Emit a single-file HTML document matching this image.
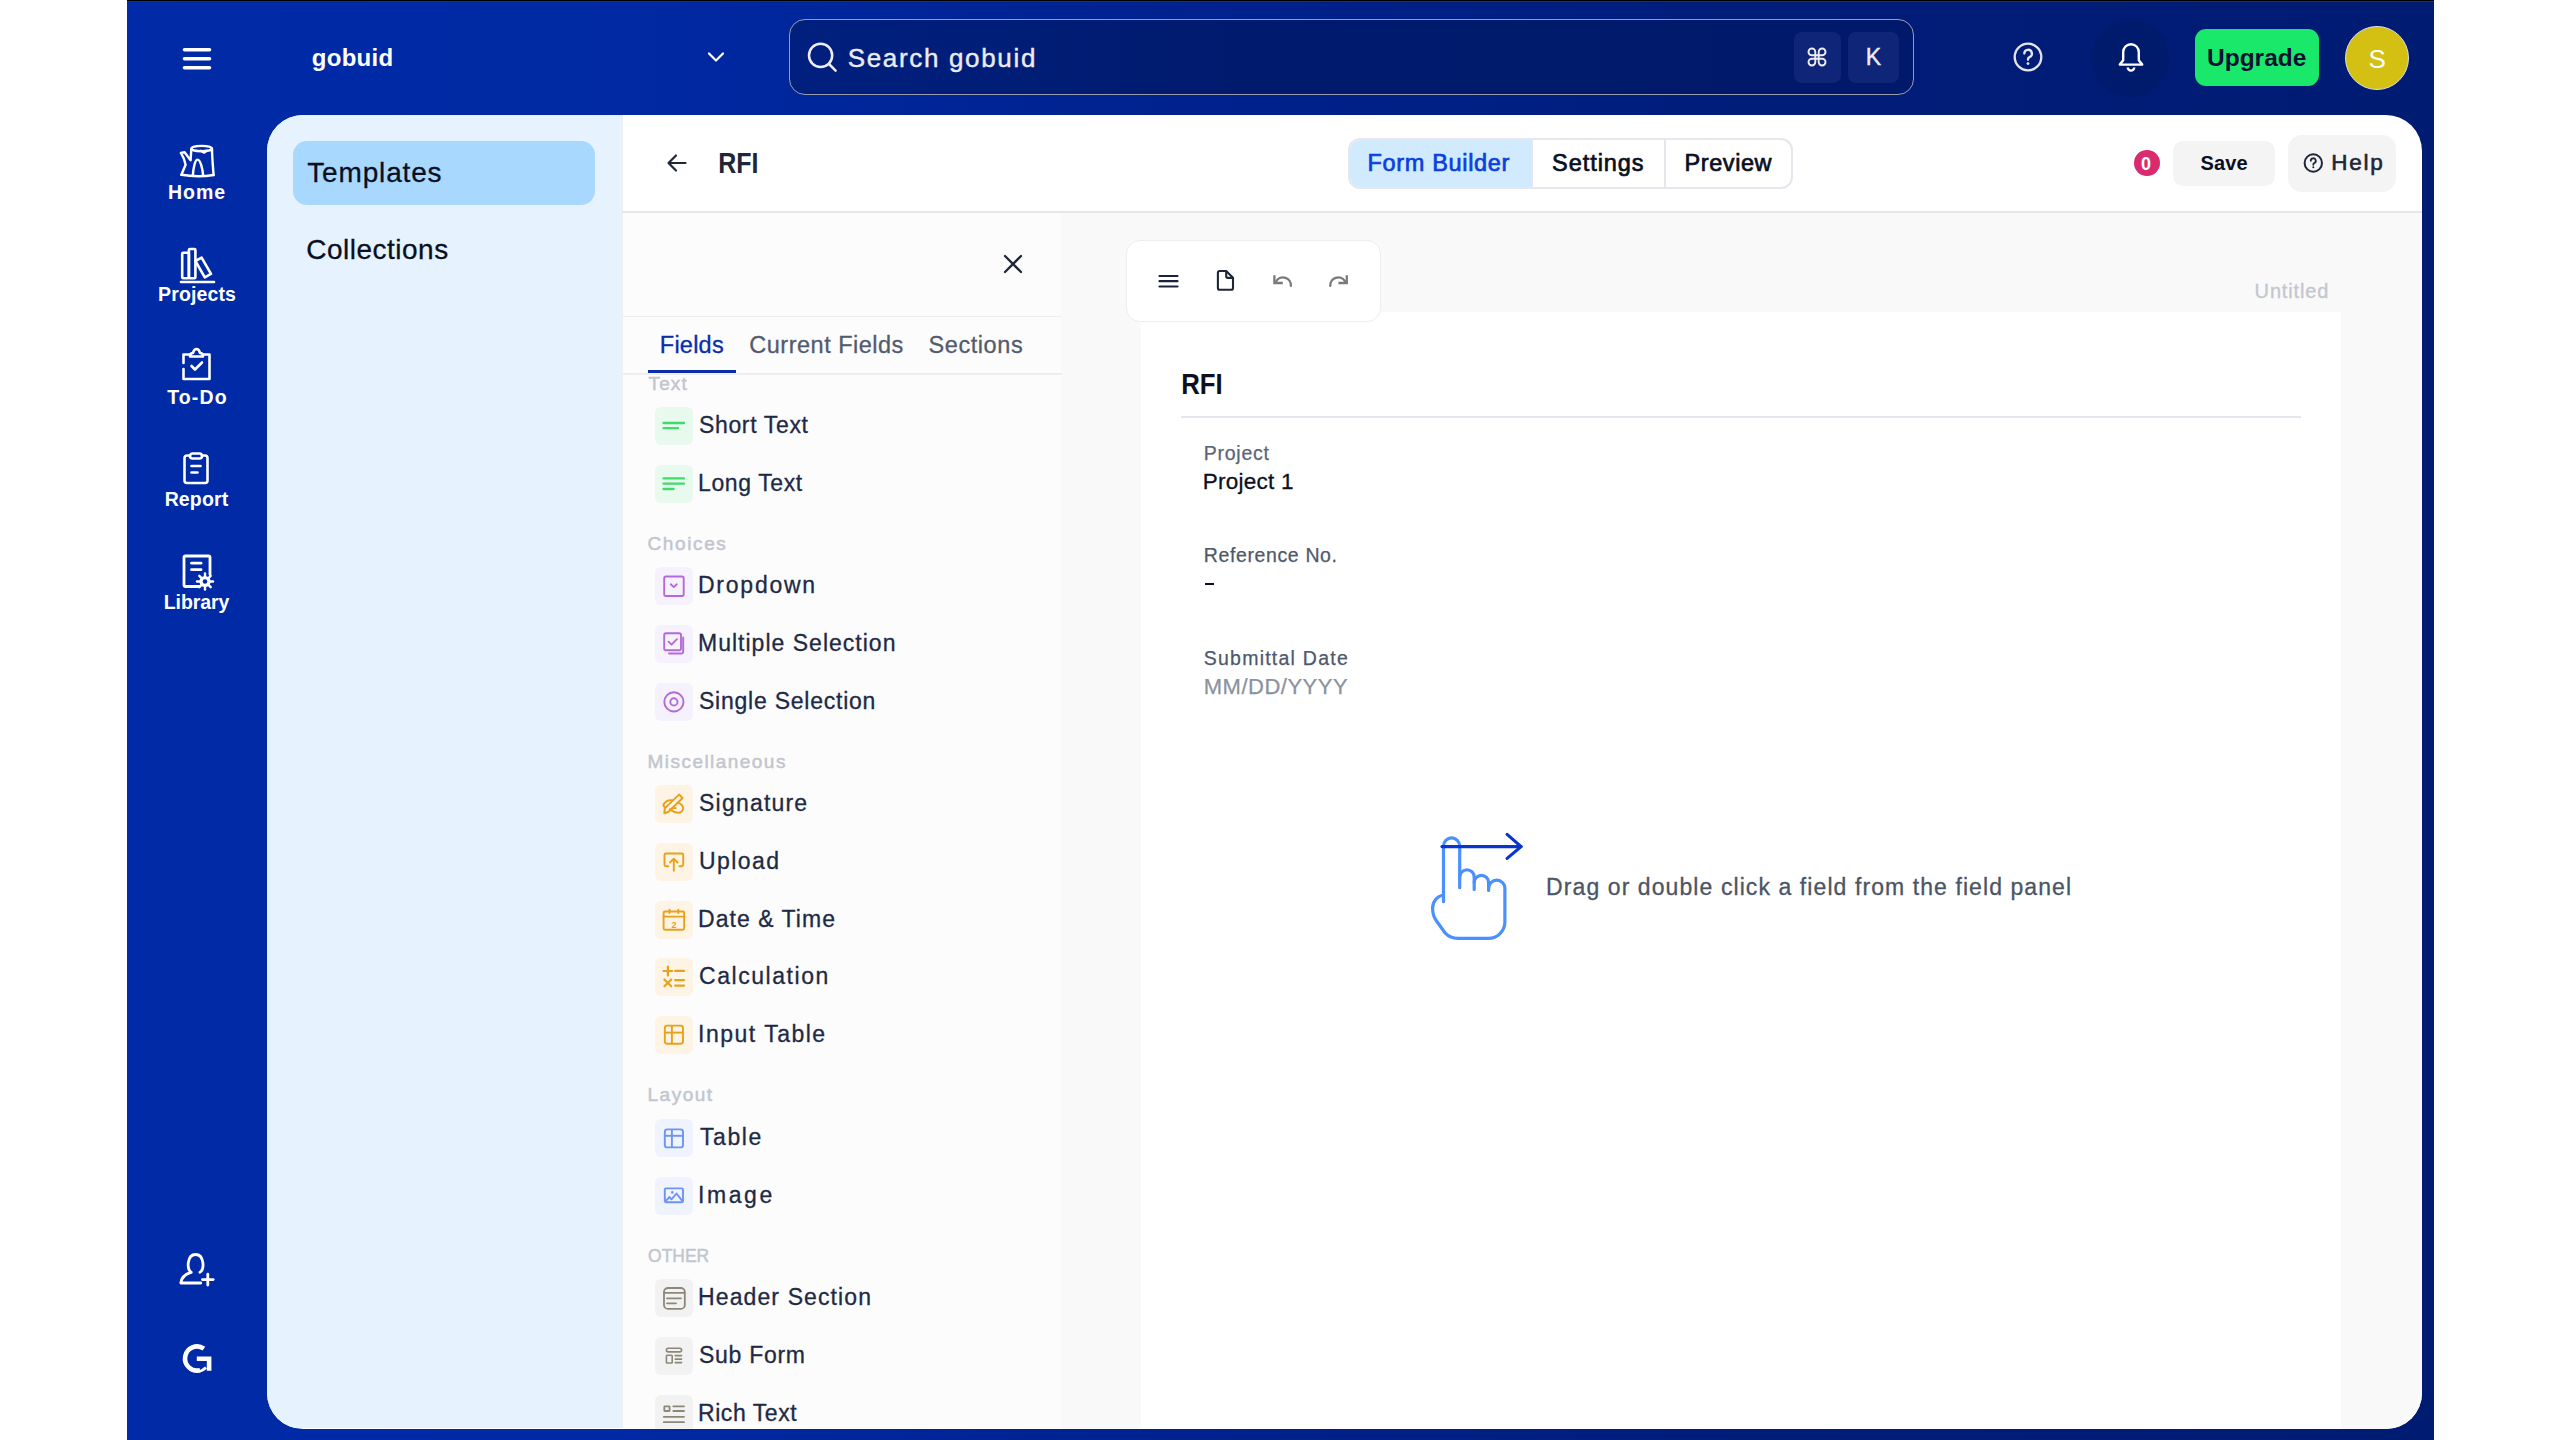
<!DOCTYPE html>
<html><head><meta charset="utf-8">
<style>
*{margin:0;padding:0;box-sizing:border-box}
html,body{width:2560px;height:1440px;overflow:hidden;background:#fff;font-family:"Liberation Sans",sans-serif}
.a{position:absolute}
.t{position:absolute;white-space:nowrap;line-height:1}
svg{overflow:visible}
</style></head>
<body>
<div class="a" style="left:127px;top:0px;width:2307px;height:1440px;background:linear-gradient(90deg,#002aa7 0%,#0029a4 20%,#00228f 45%,#001d7a 70%,#001b72 100%);"></div>
<div class="a" style="left:127px;top:0px;width:2307px;height:1px;background:#000;"></div>
<div class="a" style="left:127px;top:1px;width:2307px;height:1px;background:#0030c2;"></div>
<svg class="a" style="left:181px;top:47px" width="32" height="24" viewBox="0 0 32 24"><g stroke="#fff" stroke-width="3.6" stroke-linecap="round"><line x1="3.5" y1="2.8" x2="28.5" y2="2.8"/><line x1="3.5" y1="11.8" x2="28.5" y2="11.8"/><line x1="3.5" y1="20.8" x2="28.5" y2="20.8"/></g></svg>
<div class="t" style="left:311.80px;top:46px;font-size:24px;color:#fff;font-weight:bold;letter-spacing:0.260px;">gobuid</div>
<svg class="a" style="left:704px;top:48px" width="24" height="18" viewBox="0 0 24 18"><path d="M5 5.5l7 7 7-7" fill="none" stroke="#fff" stroke-width="2.2" stroke-linecap="round" stroke-linejoin="round"/></svg>
<div class="a" style="left:788.5px;top:19.3px;width:1125px;height:76px;background:linear-gradient(90deg,#00207f 0%,#001b6e 40%,#00196a 100%);border-radius:16px;border:1.6px solid #9a9cae;"></div>
<svg class="a" style="left:806px;top:41px" width="34" height="34" viewBox="0 0 34 34"><circle cx="14.6" cy="14.4" r="11.6" fill="none" stroke="#ececf2" stroke-width="2.5"/><line x1="23" y1="23" x2="29.6" y2="29.6" stroke="#ececf2" stroke-width="2.5" stroke-linecap="round"/></svg>
<div class="t" style="left:847.70px;top:45px;font-size:26px;color:#ececf2;letter-spacing:1.667px;-webkit-text-stroke:0.4px #ececf2;">Search gobuid</div>
<div class="a" style="left:1794px;top:32px;width:47px;height:51px;background:#0f2577;border-radius:8px;"></div>
<div class="a" style="left:1848px;top:32px;width:51px;height:51px;background:#0f2577;border-radius:8px;"></div>
<svg class="a" style="left:1808.3px;top:48px" width="18" height="18" viewBox="0 0 18 18"><path d="M7.3 14.1V3.9A3.4 3.4 0 1 0 3.9 7.3H14.1A3.4 3.4 0 1 0 10.7 3.9V14.1A3.4 3.4 0 1 0 14.1 10.7H3.9A3.4 3.4 0 1 0 7.3 14.1z" fill="none" stroke="#ececf2" stroke-width="1.9"/></svg>
<div class="t" style="left:1865.70px;top:46px;font-size:23px;color:#ececf2;-webkit-text-stroke:0.4px #ececf2;">K</div>
<svg class="a" style="left:2012px;top:41px" width="32" height="32" viewBox="0 0 32 32"><circle cx="16" cy="16" r="13.3" fill="none" stroke="#e4e4ea" stroke-width="2.3"/><path d="M12.3 12.6a3.8 3.8 0 1 1 5.2 3.5c-.9.4-1.5 1.1-1.5 2.1v.6" fill="none" stroke="#e4e4ea" stroke-width="2.3" stroke-linecap="round"/><circle cx="16" cy="22.6" r="1.4" fill="#e4e4ea"/></svg>
<div class="a" style="left:2092px;top:20px;width:77px;height:77px;border-radius:50%;background:#001a6c"></div>
<svg class="a" style="left:2116px;top:41px" width="30" height="34" viewBox="0 0 30 34"><path d="M15 3.2a7.8 7.8 0 0 0-7.8 7.8v8.2L3.8 23.6h22.4l-3.4-4.4V11A7.8 7.8 0 0 0 15 3.2z" fill="none" stroke="#fff" stroke-width="2.4" stroke-linejoin="round"/><path d="M11.8 26.4a3.2 3.2 0 0 0 6.4 0" fill="none" stroke="#fff" stroke-width="2.4"/></svg>
<div class="a" style="left:2195px;top:29px;width:124px;height:57px;background:#19e86b;border-radius:11px;"></div>
<div class="t" style="left:2207.00px;top:46px;font-size:24.5px;color:#0a1233;font-weight:bold;">Upgrade</div>
<div class="a" style="left:2345px;top:25.5px;width:64px;height:64px;border-radius:50%;background:#d3c012;border:1.5px solid #dedee8"></div>
<div class="t" style="left:2368.50px;top:46px;font-size:26px;color:#fff;">S</div>
<div class="t" style="left:168.00px;top:183px;font-size:19.5px;color:#fff;font-weight:bold;letter-spacing:1.000px;">Home</div>
<div class="t" style="left:158.00px;top:285px;font-size:19.5px;color:#fff;font-weight:bold;letter-spacing:0.143px;">Projects</div>
<div class="t" style="left:167.30px;top:388px;font-size:19.5px;color:#fff;font-weight:bold;letter-spacing:1.100px;">To-Do</div>
<div class="t" style="left:164.65px;top:490px;font-size:19.5px;color:#fff;font-weight:bold;letter-spacing:0.140px;">Report</div>
<div class="t" style="left:163.75px;top:593px;font-size:19.5px;color:#fff;font-weight:bold;letter-spacing:-0.083px;">Library</div>
<svg class="a" style="left:178px;top:144px" width="40" height="36" viewBox="0 0 40 36"><g fill="none" stroke="#fff" stroke-width="2.4" stroke-linejoin="round" stroke-linecap="round"><ellipse cx="23.6" cy="4.6" rx="10.3" ry="2.7"/><path d="M34 4.8C34 13 35 23 35.6 31"/><path d="M3.4 30.8Q19.5 33.6 35.6 31"/><path d="M13.3 5.2L12.6 16.4 6.6 8.2 2.9 8.9Q6.5 14.5 7.6 20.8L3.4 30.8"/><path d="M14.8 31.8C15.4 24 17 15.6 19.6 15.6S24.6 24 25.2 31.8"/><path d="M23 6.8L26.2 8.6 28.4 6.8"/></g></svg>
<svg class="a" style="left:178px;top:246px" width="40" height="36" viewBox="0 0 40 36"><g fill="none" stroke="#fff" stroke-width="2.6" stroke-linejoin="round" stroke-linecap="round"><rect x="4.2" y="6.7" width="6.7" height="25.5" rx="1"/><rect x="10.9" y="3" width="6.5" height="29.2" rx="1"/><path d="M17.4 15l6.2-3.4 9.4 16.3-6.2 3.4z"/><line x1="3" y1="36" x2="36" y2="36"/></g></svg>
<svg class="a" style="left:178px;top:346px" width="40" height="36" viewBox="0 0 40 36"><g fill="none" stroke="#fff" stroke-width="2.6" stroke-linejoin="round" stroke-linecap="round"><path d="M5.5 17V8.5h6.5M25 8.5h6.5v24.5h-26v-10"/><path d="M12 10.5q0-3.5 3-3.5 1-4 3.5-4t3.5 4q3 0 3 3.5z"/><path d="M13.5 20l3.5 3.5 7-7"/></g></svg>
<svg class="a" style="left:178px;top:450px" width="40" height="36" viewBox="0 0 40 36"><g fill="none" stroke="#fff" stroke-width="2.6" stroke-linejoin="round" stroke-linecap="round"><path d="M12 5.5H9a2.5 2.5 0 0 0-2.5 2.5v22.5A2.5 2.5 0 0 0 9 33h18a2.5 2.5 0 0 0 2.5-2.5V8A2.5 2.5 0 0 0 27 5.5h-3"/><rect x="12" y="3.5" width="12" height="5" rx="2.5"/><line x1="13.5" y1="16" x2="22.5" y2="16"/><line x1="13.5" y1="22.5" x2="19.5" y2="22.5"/></g></svg>
<svg class="a" style="left:178px;top:552px" width="40" height="40" viewBox="0 0 40 40"><g fill="none" stroke="#fff" stroke-width="2.8" stroke-linejoin="round" stroke-linecap="round"><path d="M21.5 34.5H7.5a1.5 1.5 0 0 1-1.5-1.5V5.5A1.5 1.5 0 0 1 7.5 4h23a1.5 1.5 0 0 1 1.5 1.5v17"/><line x1="13.5" y1="11.2" x2="23" y2="11.2"/><line x1="13.5" y1="17.7" x2="23" y2="17.7"/></g><g fill="#fff"><circle cx="27" cy="29.5" r="5.6"/></g><g stroke="#fff" stroke-width="2.4" stroke-linecap="round"><line x1="27" y1="21.5" x2="27" y2="37.5"/><line x1="19" y1="29.5" x2="35" y2="29.5"/><line x1="21.3" y1="23.8" x2="32.7" y2="35.2"/><line x1="21.3" y1="35.2" x2="32.7" y2="23.8"/></g><circle cx="27" cy="29.5" r="2.3" fill="#0029a4"/></svg>
<svg class="a" style="left:178px;top:1251px" width="40" height="38" viewBox="0 0 40 38"><g fill="none" stroke="#fff" stroke-width="2.8" stroke-linecap="round" stroke-linejoin="round"><path d="M13.3 21.3C8.5 19.5 8.7 3.5 17.6 3.5S26.7 19.5 21.9 21.3"/><path d="M12.3 21.6Q3.8 24.2 2.8 32h20"/><line x1="29.8" y1="23.2" x2="29.8" y2="34"/><line x1="24.4" y1="28.6" x2="35.2" y2="28.6"/></g></svg>
<svg class="a" style="left:178px;top:1340px" width="40" height="38" viewBox="0 0 40 38"><path d="M25.9 8.67A12 12 0 1 0 22.1 30.1" fill="none" stroke="#fff" stroke-width="4.6"/><path d="M18.8 16.4h14.6v14.4h-4.6v-9.8h-10z" fill="#fff"/><path d="M11 30.5q8 3 16-4l2 2q-8 7.5-18 2z" fill="#fff"/></svg>
<div class="a" style="left:267px;top:115px;width:2154.5px;height:1314px;border-radius:36px;overflow:hidden;background:#fff">
<div class="a" style="left:0;top:0;width:355px;height:1313px;background:#e6f3fe"></div>
<div class="a" style="left:355px;top:97px;width:439px;height:1217px;background:#fcfcfd"></div>
<div class="a" style="left:794px;top:97px;width:1361px;height:1217px;background:#f9f9fa"></div>
<div class="a" style="left:874px;top:197px;width:1200px;height:1120px;background:#fff"></div>
<div class="a" style="left:354px;top:0;width:1.5px;height:1313px;background:#eeeef3"></div>
<div class="a" style="left:355px;top:96px;width:1800px;height:2px;background:#e6e7ec"></div>
</div>
<div class="a" style="left:293px;top:141.2px;width:302px;height:63.5px;background:#a9d8fe;border-radius:14px;"></div>
<div class="t" style="left:307.20px;top:159px;font-size:28px;color:#0a0f1f;letter-spacing:0.850px;-webkit-text-stroke:0.3px #0a0f1f;">Templates</div>
<div class="t" style="left:306.20px;top:236px;font-size:28px;color:#0a0f1f;letter-spacing:0.500px;-webkit-text-stroke:0.3px #0a0f1f;">Collections</div>
<svg class="a" style="left:664px;top:150px" width="26" height="26" viewBox="0 0 26 26"><path d="M12 5.5l-7.5 7.5 7.5 7.5M4.5 13h17" fill="none" stroke="#1e2638" stroke-width="2.2" stroke-linecap="round" stroke-linejoin="round"/></svg>
<div class="t" style="left:718.00px;top:149px;font-size:29px;color:#1e2638;font-weight:bold;transform:scaleX(0.8605);transform-origin:2.00px 0;">RFI</div>
<div class="a" style="left:1348px;top:138px;width:445px;height:50.5px;border:2px solid #e6e7ec;border-radius:12px;overflow:hidden;background:#fff">
<div class="a" style="left:0;top:0;width:180.5px;height:47px;background:#d1eafe"></div>
<div class="a" style="left:180.5px;top:0;width:2.5px;height:47px;background:#e6e7ec"></div>
<div class="a" style="left:313.5px;top:0;width:2.5px;height:47px;background:#e6e7ec"></div>
</div>
<div class="t" style="left:1367.60px;top:152px;font-size:23.5px;color:#0b3fe0;letter-spacing:0.655px;-webkit-text-stroke:0.7px #0b3fe0;">Form Builder</div>
<div class="t" style="left:1552.00px;top:152px;font-size:23.5px;color:#0a0f1f;letter-spacing:0.957px;-webkit-text-stroke:0.7px #0a0f1f;">Settings</div>
<div class="t" style="left:1684.50px;top:152px;font-size:23.5px;color:#0a0f1f;letter-spacing:0.583px;-webkit-text-stroke:0.7px #0a0f1f;">Preview</div>
<div class="a" style="left:2134px;top:150.2px;width:25.8px;height:25.8px;border-radius:50%;background:#db2b6e"></div>
<div class="t" style="left:2141.00px;top:155px;font-size:18px;color:#fff;font-weight:bold;">0</div>
<div class="a" style="left:2172.7px;top:141px;width:102.3px;height:45px;background:#f4f4f5;border-radius:10px;"></div>
<div class="t" style="left:2200.60px;top:153px;font-size:20px;color:#0a0f1f;font-weight:bold;letter-spacing:0.067px;">Save</div>
<div class="a" style="left:2288px;top:135px;width:108px;height:57px;background:#f4f4f5;border-radius:14px;"></div>
<svg class="a" style="left:2302px;top:152px" width="22" height="22" viewBox="0 0 22 22"><circle cx="11.3" cy="11" r="8.7" fill="none" stroke="#1e2638" stroke-width="2"/><path d="M8.8 8.8a2.5 2.5 0 1 1 3.4 2.3c-.6.3-.9.7-.9 1.3v.4" fill="none" stroke="#1e2638" stroke-width="1.8" stroke-linecap="round"/><circle cx="11.3" cy="15.2" r="1" fill="#1e2638"/></svg>
<div class="t" style="left:2331.30px;top:152px;font-size:22.5px;color:#1e2638;letter-spacing:1.733px;-webkit-text-stroke:0.6px #1e2638;">Help</div>
<svg class="a" style="left:1000px;top:251px" width="26" height="26" viewBox="0 0 26 26"><path d="M5 5l16 16M21 5L5 21" fill="none" stroke="#1e2638" stroke-width="2.3" stroke-linecap="round"/></svg>
<div class="a" style="left:622px;top:315.5px;width:440px;height:1.6px;background:#eeeff2;"></div>
<div class="t" style="left:659.80px;top:334px;font-size:23.5px;color:#0a2da8;letter-spacing:0.240px;-webkit-text-stroke:0.3px #0a2da8;">Fields</div>
<div class="t" style="left:749.30px;top:334px;font-size:23.5px;color:#525b6e;letter-spacing:0.500px;-webkit-text-stroke:0.3px #525b6e;">Current Fields</div>
<div class="t" style="left:928.50px;top:334px;font-size:23.5px;color:#525b6e;letter-spacing:0.571px;-webkit-text-stroke:0.3px #525b6e;">Sections</div>
<div class="a" style="left:622px;top:373px;width:440px;height:2px;background:#eeeff2;"></div>
<div class="a" style="left:648px;top:370px;width:88px;height:3px;background:#0a2ca8;"></div>
<div class="t" style="left:648.50px;top:374px;font-size:19px;color:#c2c6ce;letter-spacing:1.133px;-webkit-text-stroke:0.5px #c2c6ce;">Text</div>
<div class="a" style="left:655px;top:407.1px;width:38px;height:38px;background:#e8f9ee;border-radius:6px;"></div>
<svg class="a" style="left:655px;top:407.1px" width="38" height="38" viewBox="0 0 38 38"><g stroke="#3ddc6b" stroke-width="2.3" stroke-linecap="round"><line x1="8.5" y1="16" x2="29" y2="16"/><line x1="8.5" y1="21.2" x2="23" y2="21.2"/></g></svg>
<div class="t" style="left:699.00px;top:414px;font-size:23px;color:#1e2a44;letter-spacing:0.644px;-webkit-text-stroke:0.3px #1e2a44;">Short Text</div>
<div class="a" style="left:655px;top:464.8px;width:38px;height:38px;background:#e8f9ee;border-radius:6px;"></div>
<svg class="a" style="left:655px;top:464.8px" width="38" height="38" viewBox="0 0 38 38"><g stroke="#3ddc6b" stroke-width="2.3" stroke-linecap="round"><line x1="8.5" y1="13.4" x2="29" y2="13.4"/><line x1="8.5" y1="18.7" x2="29" y2="18.7"/><line x1="8.5" y1="24" x2="18.5" y2="24"/></g></svg>
<div class="t" style="left:698.00px;top:472px;font-size:23px;color:#1e2a44;letter-spacing:0.613px;-webkit-text-stroke:0.3px #1e2a44;">Long Text</div>
<div class="t" style="left:647.50px;top:534px;font-size:19px;color:#c2c6ce;letter-spacing:1.617px;-webkit-text-stroke:0.5px #c2c6ce;">Choices</div>
<div class="a" style="left:655px;top:567.4px;width:38px;height:38px;background:#f6f2fd;border-radius:6px;"></div>
<svg class="a" style="left:655px;top:567.4px" width="38" height="38" viewBox="0 0 38 38"><g fill="none" stroke="#b36ad8" stroke-width="1.9" stroke-linecap="round" stroke-linejoin="round"><rect x="9.2" y="9.5" width="19.5" height="19.5" rx="1.8"/><path d="M15.8 17.3l3 2.8 3-2.8"/></g></svg>
<div class="t" style="left:698.00px;top:574px;font-size:23px;color:#1e2a44;letter-spacing:1.757px;-webkit-text-stroke:0.3px #1e2a44;">Dropdown</div>
<div class="a" style="left:655px;top:625px;width:38px;height:38px;background:#f6f2fd;border-radius:6px;"></div>
<svg class="a" style="left:655px;top:625px" width="38" height="38" viewBox="0 0 38 38"><g fill="none" stroke="#b36ad8" stroke-width="1.9" stroke-linecap="round" stroke-linejoin="round"><rect x="9.2" y="8.2" width="16.8" height="17" rx="1.8"/><path d="M28.2 12.5v14.5a1.5 1.5 0 0 1-1.5 1.5H14"/><path d="M13.5 16.7l3 3 5.5-5.5"/></g></svg>
<div class="t" style="left:698.00px;top:632px;font-size:23px;color:#1e2a44;letter-spacing:1.012px;-webkit-text-stroke:0.3px #1e2a44;">Multiple Selection</div>
<div class="a" style="left:655px;top:682.6px;width:38px;height:38px;background:#f6f2fd;border-radius:6px;"></div>
<svg class="a" style="left:655px;top:682.6px" width="38" height="38" viewBox="0 0 38 38"><g fill="none" stroke="#b36ad8" stroke-width="1.9"><circle cx="18.9" cy="18.9" r="9.6"/><circle cx="18.9" cy="18.9" r="3.6"/></g></svg>
<div class="t" style="left:699.00px;top:690px;font-size:23px;color:#1e2a44;letter-spacing:0.760px;-webkit-text-stroke:0.3px #1e2a44;">Single Selection</div>
<div class="t" style="left:647.50px;top:752px;font-size:19px;color:#c2c6ce;letter-spacing:1.458px;-webkit-text-stroke:0.5px #c2c6ce;">Miscellaneous</div>
<div class="a" style="left:655px;top:785.3px;width:38px;height:38px;background:#fdf4e6;border-radius:6px;"></div>
<svg class="a" style="left:655px;top:785.3px" width="38" height="38" viewBox="0 0 38 38"><g fill="none" stroke="#e8a11a" stroke-width="2" stroke-linejoin="round" stroke-linecap="round"><path d="M24 9.6L27.6 13 13.6 26.8 9.3 28.2 9.8 23.4z"/><path d="M10 22.4Q7.2 20.6 9.6 18L12.2 15.9Q13.8 15 17.6 15.3"/><path d="M22.9 17.6Q28.6 19.6 28 24Q27 28.2 22 27.6Q18.6 27.1 14.8 24.4Q16.8 23 20.6 23"/></g></svg>
<div class="t" style="left:699.00px;top:792px;font-size:23px;color:#1e2a44;letter-spacing:1.213px;-webkit-text-stroke:0.3px #1e2a44;">Signature</div>
<div class="a" style="left:655px;top:843.0px;width:38px;height:38px;background:#fdf4e6;border-radius:6px;"></div>
<svg class="a" style="left:655px;top:843.0px" width="38" height="38" viewBox="0 0 38 38"><g fill="none" stroke="#e8a11a" stroke-width="1.9" stroke-linejoin="round" stroke-linecap="round"><path d="M13.3 23.3h-2.3a1.5 1.5 0 0 1-1.5-1.5V12a1.5 1.5 0 0 1 1.5-1.5h15.7a1.5 1.5 0 0 1 1.5 1.5v9.8a1.5 1.5 0 0 1-1.5 1.5h-2.2"/><path d="M18.8 27.8V15.7M15 19.5l3.8-3.8 3.8 3.8"/></g></svg>
<div class="t" style="left:699.00px;top:850px;font-size:23px;color:#1e2a44;letter-spacing:1.440px;-webkit-text-stroke:0.3px #1e2a44;">Upload</div>
<div class="a" style="left:655px;top:900.6999999999999px;width:38px;height:38px;background:#fdf4e6;border-radius:6px;"></div>
<svg class="a" style="left:655px;top:900.6999999999999px" width="38" height="38" viewBox="0 0 38 38"><g fill="none" stroke="#e8a11a" stroke-width="1.9" stroke-linejoin="round" stroke-linecap="round"><rect x="8.6" y="10.5" width="20.6" height="18.2" rx="1.5"/><line x1="8.6" y1="15.6" x2="29.2" y2="15.6"/><line x1="14.5" y1="8.8" x2="14.5" y2="12"/><line x1="23.3" y1="8.8" x2="23.3" y2="12"/></g><text x="18.9" y="26.6" font-size="9" font-weight="bold" text-anchor="middle" fill="#e8a11a" font-family="Liberation Sans">2</text></svg>
<div class="t" style="left:698.00px;top:908px;font-size:23px;color:#1e2a44;letter-spacing:1.040px;-webkit-text-stroke:0.3px #1e2a44;">Date &amp; Time</div>
<div class="a" style="left:655px;top:958.4px;width:38px;height:38px;background:#fdf4e6;border-radius:6px;"></div>
<svg class="a" style="left:655px;top:958.4px" width="38" height="38" viewBox="0 0 38 38"><g fill="none" stroke="#e8a11a" stroke-width="2.2" stroke-linecap="round"><line x1="12.9" y1="8.6" x2="12.9" y2="17.4"/><line x1="8.5" y1="13" x2="17.3" y2="13"/><line x1="20.2" y1="12.8" x2="29" y2="12.8"/><line x1="9.4" y1="21.5" x2="16.2" y2="28.3"/><line x1="16.2" y1="21.5" x2="9.4" y2="28.3"/><line x1="20.2" y1="22.1" x2="29" y2="22.1"/><line x1="20.2" y1="27.6" x2="29" y2="27.6"/></g></svg>
<div class="t" style="left:699.00px;top:965px;font-size:23px;color:#1e2a44;letter-spacing:1.550px;-webkit-text-stroke:0.3px #1e2a44;">Calculation</div>
<div class="a" style="left:655px;top:1016.0999999999999px;width:38px;height:38px;background:#fdf4e6;border-radius:6px;"></div>
<svg class="a" style="left:655px;top:1016.0999999999999px" width="38" height="38" viewBox="0 0 38 38"><g fill="none" stroke="#e8a11a" stroke-width="1.9" stroke-linejoin="round"><rect x="9.8" y="9.6" width="18.2" height="18.2" rx="2.5"/><line x1="9.8" y1="16.6" x2="28" y2="16.6"/><line x1="16.9" y1="9.6" x2="16.9" y2="27.8"/></g></svg>
<div class="t" style="left:698.00px;top:1023px;font-size:23px;color:#1e2a44;letter-spacing:1.500px;-webkit-text-stroke:0.3px #1e2a44;">Input Table</div>
<div class="t" style="left:647.50px;top:1085px;font-size:19px;color:#c2c6ce;letter-spacing:1.500px;-webkit-text-stroke:0.5px #c2c6ce;">Layout</div>
<div class="a" style="left:655px;top:1118.8px;width:38px;height:38px;background:#eef3fe;border-radius:6px;"></div>
<svg class="a" style="left:655px;top:1118.8px" width="38" height="38" viewBox="0 0 38 38"><g fill="none" stroke="#6e93f5" stroke-width="1.9" stroke-linejoin="round"><rect x="9.8" y="10.4" width="18.2" height="18" rx="2.5"/><line x1="9.8" y1="16.8" x2="28" y2="16.8"/><line x1="16.9" y1="10.4" x2="16.9" y2="28.4"/></g></svg>
<div class="t" style="left:700.00px;top:1126px;font-size:23px;color:#1e2a44;letter-spacing:1.562px;-webkit-text-stroke:0.3px #1e2a44;">Table</div>
<div class="a" style="left:655px;top:1176.5px;width:38px;height:38px;background:#eef3fe;border-radius:6px;"></div>
<svg class="a" style="left:655px;top:1176.5px" width="38" height="38" viewBox="0 0 38 38"><g fill="none" stroke="#6e93f5" stroke-width="1.9" stroke-linejoin="round"><rect x="9.8" y="11.4" width="18.2" height="13.8" rx="1.2"/><path d="M10.3 24.6l4.2-4.6 2 2.3 5-5.8 6.3 8.1"/></g><circle cx="17.3" cy="15.4" r="1.3" fill="#6e93f5"/></svg>
<div class="t" style="left:698.00px;top:1184px;font-size:23px;color:#1e2a44;letter-spacing:2.562px;-webkit-text-stroke:0.3px #1e2a44;">Image</div>
<div class="t" style="left:647.50px;top:1246px;font-size:19px;color:#c2c6ce;transform:scaleX(0.9192);transform-origin:1.00px 0;-webkit-text-stroke:0.5px #c2c6ce;">OTHER</div>
<div class="a" style="left:655px;top:1279.2px;width:38px;height:38px;background:#f2f2f2;border-radius:6px;"></div>
<svg class="a" style="left:655px;top:1279.2px" width="38" height="38" viewBox="0 0 38 38"><g fill="none" stroke="#8c8878" stroke-width="1.8" stroke-linejoin="round" stroke-linecap="round"><rect x="9" y="9" width="20.8" height="20.9" rx="4"/><line x1="9" y1="13.9" x2="29.8" y2="13.9"/><line x1="12" y1="19.3" x2="26" y2="19.3"/><line x1="12" y1="24.3" x2="21" y2="24.3"/></g></svg>
<div class="t" style="left:698.00px;top:1286px;font-size:23px;color:#1e2a44;letter-spacing:1.115px;-webkit-text-stroke:0.3px #1e2a44;">Header Section</div>
<div class="a" style="left:655px;top:1336.9px;width:38px;height:38px;background:#f2f2f2;border-radius:6px;"></div>
<svg class="a" style="left:655px;top:1336.9px" width="38" height="38" viewBox="0 0 38 38"><g fill="none" stroke="#8c8878" stroke-width="1.6" stroke-linejoin="round" stroke-linecap="round"><rect x="11.4" y="11.2" width="15.2" height="3.7" rx="1.8"/><rect x="11.4" y="18.2" width="5.8" height="7.8" rx="0.8"/><line x1="20.2" y1="18.6" x2="26.6" y2="18.6"/><line x1="20.2" y1="22.1" x2="26.6" y2="22.1"/><line x1="20.2" y1="25.6" x2="26.6" y2="25.6"/></g></svg>
<div class="t" style="left:699.00px;top:1344px;font-size:23px;color:#1e2a44;letter-spacing:0.714px;-webkit-text-stroke:0.3px #1e2a44;">Sub Form</div>
<div class="a" style="left:655px;top:1394.6000000000001px;width:38px;height:38px;background:#f2f2f2;border-radius:6px;"></div>
<svg class="a" style="left:655px;top:1394.6000000000001px" width="38" height="38" viewBox="0 0 38 38"><g fill="none" stroke="#8c8878" stroke-width="1.8" stroke-linejoin="round" stroke-linecap="round"><rect x="9.3" y="11.4" width="5.3" height="4.6" rx="0.5"/><line x1="18.3" y1="11.3" x2="29" y2="11.3"/><line x1="18.3" y1="16" x2="29" y2="16"/><line x1="8.8" y1="21.9" x2="29" y2="21.9"/><line x1="8.8" y1="27.2" x2="29" y2="27.2"/></g></svg>
<div class="t" style="left:698.00px;top:1402px;font-size:23px;color:#1e2a44;letter-spacing:0.562px;-webkit-text-stroke:0.3px #1e2a44;">Rich Text</div>
<div class="a" style="left:1126px;top:239.5px;width:254.5px;height:82px;background:#fff;border-radius:14px;border:1.5px solid #eceef2;"></div>
<svg class="a" style="left:1155px;top:266px" width="26" height="26" viewBox="0 0 26 26"><g stroke="#1a2040" stroke-width="2.2" stroke-linecap="round"><line x1="4.5" y1="10" x2="22.5" y2="10"/><line x1="4.5" y1="15.2" x2="22.5" y2="15.2"/><line x1="4.5" y1="20.5" x2="22.5" y2="20.5"/></g></svg>
<svg class="a" style="left:1212px;top:266px" width="26" height="26" viewBox="0 0 26 26"><g fill="none" stroke="#1e2638" stroke-width="2.1" stroke-linejoin="round"><path d="M5.9 6.85a1.8 1.8 0 0 1 1.8-1.8h6.5l6.8 6.8v10.1a1.8 1.8 0 0 1-1.8 1.8H7.7a1.8 1.8 0 0 1-1.8-1.8z"/><path d="M14.2 5.05v5.2a1.6 1.6 0 0 0 1.6 1.6h5.2"/></g></svg>
<svg class="a" style="left:1268px;top:266px" width="26" height="26" viewBox="0 0 26 26"><g fill="none" stroke="#7a7a7a" stroke-width="2.3" stroke-linejoin="miter"><path d="M6.4 10.4V17h7.2" stroke-linecap="square"/><path d="M8.3 15.2A7.9 7.9 0 0 1 22.9 19.9" stroke-linecap="round"/></g></svg>
<svg class="a" style="left:1325px;top:266px" width="26" height="26" viewBox="0 0 26 26"><g fill="none" stroke="#7a7a7a" stroke-width="2.3" stroke-linejoin="miter"><path d="M21.8 10.4V17h-7.2" stroke-linecap="square"/><path d="M19.9 15.2A7.9 7.9 0 0 0 5.3 19.9" stroke-linecap="round"/></g></svg>
<div class="t" style="left:2254.60px;top:281px;font-size:20px;color:#c3c6ce;letter-spacing:0.857px;-webkit-text-stroke:0.3px #c3c6ce;">Untitled</div>
<div class="t" style="left:1181.10px;top:369px;font-size:29.5px;color:#0b0f1e;font-weight:bold;transform:scaleX(0.8727);transform-origin:2.00px 0;">RFI</div>
<div class="a" style="left:1181px;top:416.4px;width:1120px;height:2px;background:#e6e7ec;"></div>
<div class="t" style="left:1203.80px;top:444px;font-size:19.5px;color:#5b6478;letter-spacing:0.733px;-webkit-text-stroke:0.25px #5b6478;">Project</div>
<div class="t" style="left:1202.80px;top:471px;font-size:22.5px;color:#0b1020;letter-spacing:0.238px;-webkit-text-stroke:0.3px #0b1020;">Project 1</div>
<div class="t" style="left:1203.75px;top:546px;font-size:19.5px;color:#4f586b;letter-spacing:0.625px;-webkit-text-stroke:0.25px #4f586b;">Reference No.</div>
<div class="a" style="left:1205px;top:582.5px;width:9px;height:2px;background:#0b1020;"></div>
<div class="t" style="left:1203.75px;top:649px;font-size:19.5px;color:#4f586b;letter-spacing:1.238px;-webkit-text-stroke:0.25px #4f586b;">Submittal Date</div>
<div class="t" style="left:1203.75px;top:676px;font-size:22px;color:#8b919e;letter-spacing:0.500px;-webkit-text-stroke:0.25px #8b919e;">MM/DD/YYYY</div>
<svg class="a" style="left:1420px;top:820px" width="120" height="130" viewBox="0 0 120 130"><g fill="none" stroke="#4a90ff" stroke-width="3.2" stroke-linecap="round" stroke-linejoin="round"><path d="M23.5 81.7V26a8.1 8.1 0 0 1 16.2 0v41.7"/><path d="M39.7 57a7.25 7.25 0 0 1 14.5 0v12.5"/><path d="M54.2 62.5a7.2 7.2 0 0 1 14.4 0v7.9"/><path d="M68.6 68.3a8.15 8.15 0 0 1 16.3 0V102a16.5 16.5 0 0 1-16.5 16.3H38a18 18 0 0 1-13-5.5L16.5 101a22 22 0 0 1-3.9-12.5c0-7 4.5-12.5 10.9-13.5"/></g><g fill="none" stroke="#0a34d0" stroke-width="3.2" stroke-linecap="round" stroke-linejoin="round"><path d="M22 26.6h79"/><path d="M87.1 14.4l14 12.2-14 11.8"/></g></svg>
<div class="t" style="left:1546.10px;top:876px;font-size:23px;color:#4b5565;letter-spacing:1.083px;-webkit-text-stroke:0.3px #4b5565;">Drag or double click a field from the field panel</div>
<div class="a" style="left:267px;top:1429px;width:2154.5px;height:11px;background:linear-gradient(90deg,#002aa7 0%,#0029a4 20%,#00228f 45%,#001d7a 70%,#001b72 100%);background-size:2307px 100%;background-position:-140px 0;"></div>
</body></html>
